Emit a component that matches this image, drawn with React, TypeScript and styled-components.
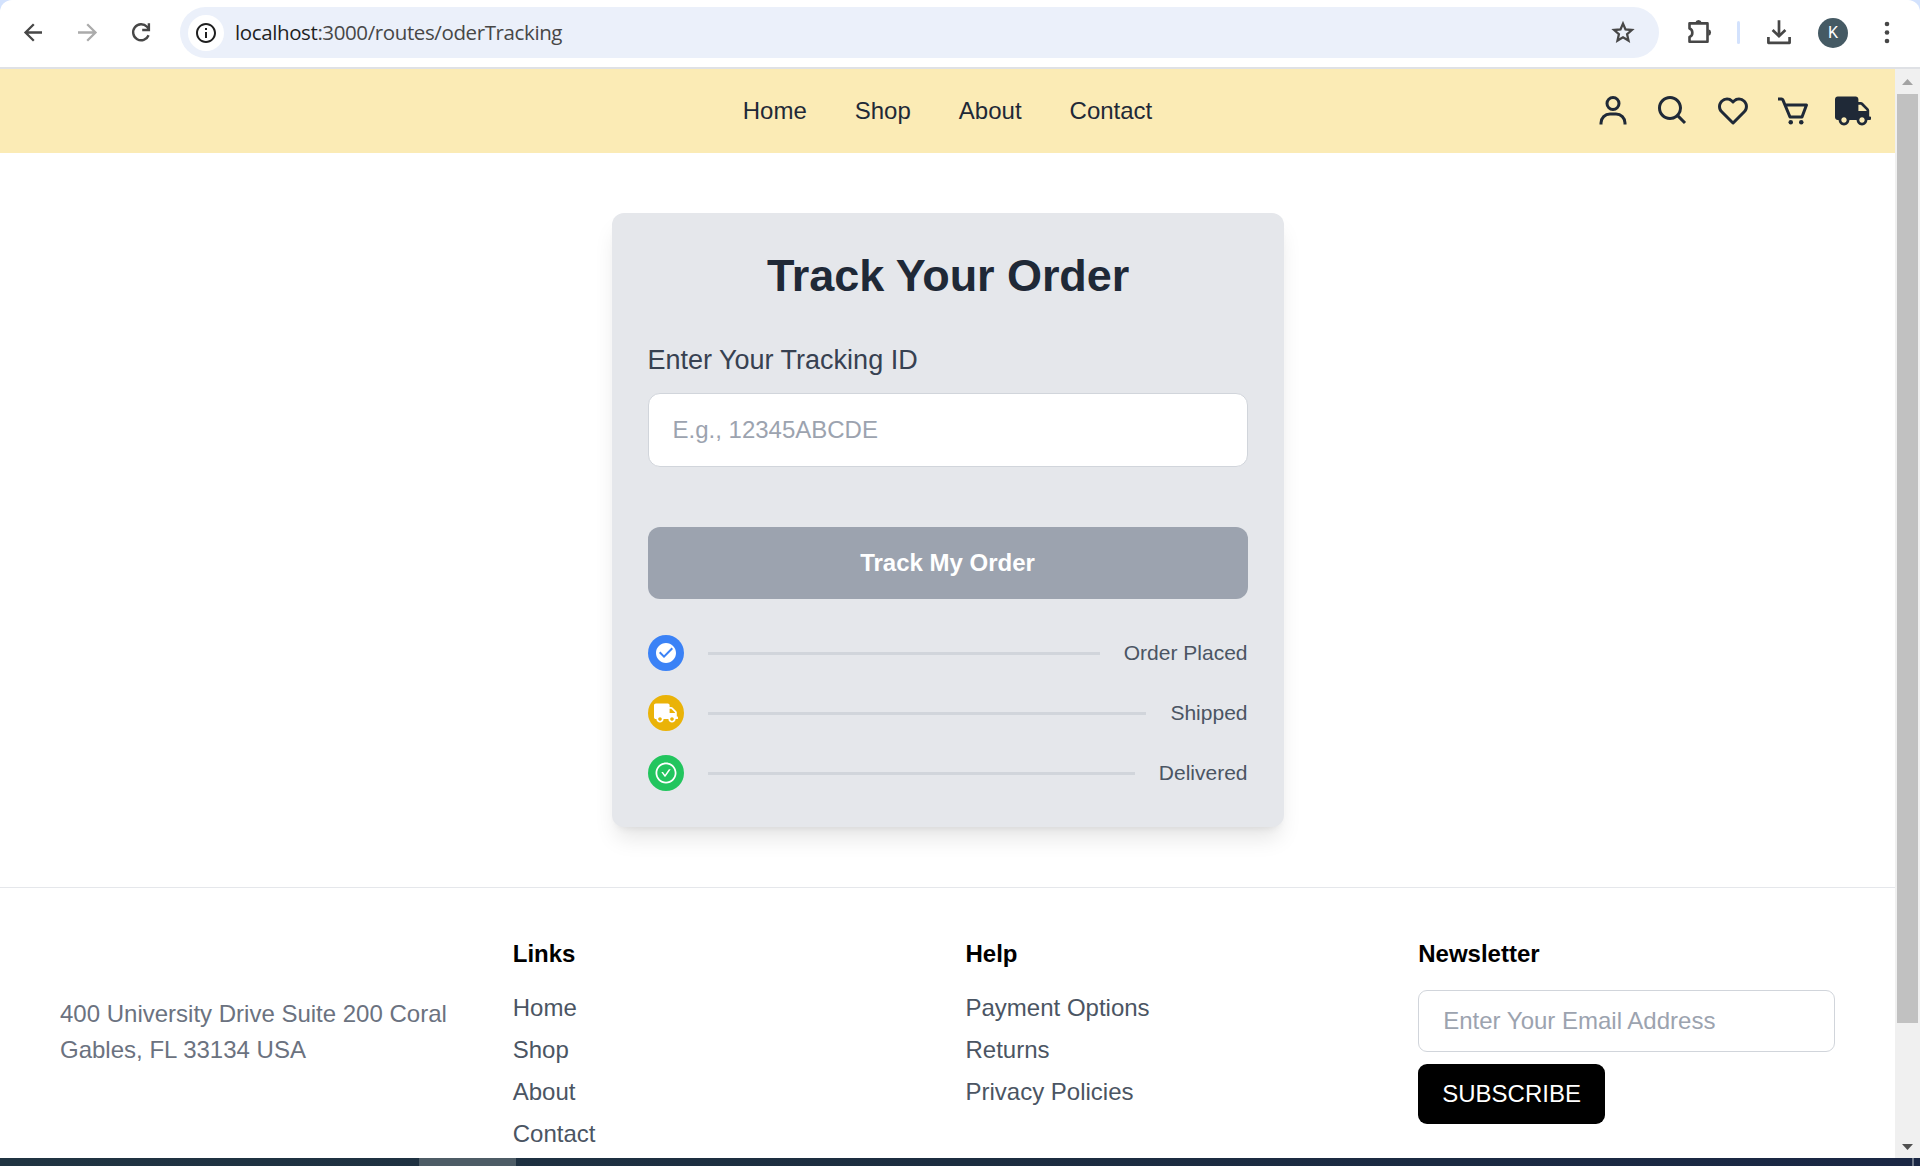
import React from "react";
import styled, { createGlobalStyle } from "styled-components";
import { BiUser, BiSearch, BiHeart, BiCart } from "react-icons/bi";
import { FaTruck } from "react-icons/fa";
import { AiOutlineCheckCircle } from "react-icons/ai";
import { MdCheckCircle, MdInfoOutline } from "react-icons/md";

const GlobalStyle = createGlobalStyle`
  *, *::before, *::after { box-sizing: border-box; }
  body { margin: 0; background: #fff; overflow: hidden; }
  body, input, button { font-family: "Liberation Sans", Arial, sans-serif; font-size: 24px; line-height: 36px; }
  h1, h2, p, ul { margin: 0; padding: 0; }
  ul { list-style: none; }
  a { color: inherit; text-decoration: none; }
  svg { display: block; flex: none; }
`;

const Screen = styled.div`
  display: flex;
  flex-direction: column;
  height: 1166px;
  overflow: hidden;
`;

const BrowserFrame = styled.div`
  flex: none;
  background: #d3e2fd;
`;

const Toolbar = styled.div`
  display: flex;
  align-items: center;
  height: 69px;
  padding: 0 21px 2px 20px;
  background: #fff;
  border-bottom: 2px solid #dfe1e5;
  border-radius: 12px 12px 0 0;
  color: #474747;
`;

const NavButtons = styled.div`
  display: flex;
  gap: 27px;
  width: 160px;
`;

const AddressBar = styled.div`
  display: flex;
  align-items: center;
  width: 1479px;
  height: 51px;
  padding: 0 24px 0 8px;
  border-radius: 26px;
  background: #ebf0fa;
`;

const SiteInfo = styled.div`
  display: grid;
  place-items: center;
  width: 36px;
  height: 36px;
  border-radius: 50%;
  background: #fff;
  color: #1f1f1f;
`;

const Url = styled.span`
  flex: 1;
  margin-left: 11px;
  padding-bottom: 2px;
  font-family: "Open Sans", "Noto Sans", sans-serif;
  font-size: 20.5px;
  letter-spacing: -0.39px;
  color: #474747;
`;

const Host = styled.span`
  color: #1f1f1f;
`;

const ToolbarActions = styled.div`
  display: flex;
  align-items: center;
  gap: 27px;
  margin-left: 28px;
`;

const Divider = styled.span`
  width: 3px;
  height: 23px;
  margin-left: -3px;
  border-radius: 2px;
  background: #d3e2fd;
`;

const Avatar = styled.span`
  display: grid;
  place-items: center;
  width: 30px;
  height: 30px;
  margin-top: 1px;
  border-radius: 50%;
  background: #455a64;
  color: #fff;
  font-family: Roboto, sans-serif;
  font-size: 16px;
  line-height: 30px;
`;

const Viewport = styled.div`
  display: flex;
  flex: 1;
  min-height: 0;
`;

const Page = styled.div`
  flex: 1;
  overflow: hidden;
`;

const Scrollbar = styled.div`
  display: flex;
  flex-direction: column;
  align-items: center;
  width: 25px;
  background: #f0f0f0;
`;

const ScrollArrow = styled.div<{ $down?: boolean }>`
  display: grid;
  place-items: center;
  width: 100%;
  height: 25px;
  padding-top: ${(p) => (p.$down ? 3 : 1)}px;
  color: ${(p) => (p.$down ? "#505050" : "#a3a3a3")};
  svg { transform: ${(p) => (p.$down ? "rotate(180deg)" : "none")}; }
`;

const ScrollTrack = styled.div`
  flex: 1;
  width: 21px;
`;

const ScrollThumb = styled.div`
  height: 929px;
  background: #c1c1c1;
`;

const Header = styled.header`
  display: grid;
  grid-template-columns: 1fr auto 1fr;
  align-items: center;
  height: 84px;
  padding: 0 24px;
  background: #fbebb5;
  color: #1f2937;
`;

const MainNav = styled.nav`
  display: flex;
  grid-column: 2;
  gap: 48px;
`;

const HeaderIcons = styled.div`
  display: flex;
  justify-content: flex-end;
  gap: 24px;
`;

const Main = styled.main`
  display: flex;
  justify-content: center;
  padding: 60px 0;
`;

const Card = styled.section`
  width: 672px;
  padding: 36px;
  border-radius: 12px;
  background: #e5e7eb;
  box-shadow: 0 15px 22.5px -4.5px rgba(0, 0, 0, 0.1), 0 6px 9px -6px rgba(0, 0, 0, 0.1);
`;

const Title = styled.h1`
  margin-bottom: 36px;
  padding-left: 1px;
  color: #1f2937;
  font-size: 45px;
  font-weight: 700;
  letter-spacing: -0.08px;
  line-height: 54px;
  text-align: center;
`;

const Label = styled.label`
  display: block;
  margin-bottom: 12px;
  color: #374151;
  font-size: 27px;
  line-height: 42px;
`;

const TextField = styled.input<{ $compact?: boolean }>`
  display: block;
  width: 100%;
  height: ${(p) => (p.$compact ? 62 : 74)}px;
  padding: 0 24px;
  border: 1px solid #d1d5db;
  border-radius: ${(p) => (p.$compact ? 9 : 12)}px;
  background: #fff;
  outline: none;
  &::placeholder { color: #9ca3af; opacity: 1; }
`;

const TrackButton = styled.button`
  display: block;
  width: 100%;
  height: 72px;
  margin: 60px 0 36px;
  padding: 0;
  border: 0;
  border-radius: 12px;
  background: #9ca3af;
  color: #fff;
  font-weight: 700;
`;

const Steps = styled.ul`
  display: flex;
  flex-direction: column;
  gap: 24px;
`;

const Step = styled.li`
  display: flex;
  align-items: center;
  gap: 24px;
  color: #4b5563;
  font-size: 21px;
  line-height: 30px;
`;

const StepBadge = styled.span<{ $color: string }>`
  display: grid;
  place-items: center;
  width: 36px;
  height: 36px;
  border-radius: 50%;
  background: ${(p) => p.$color};
  color: #fff;
`;

const StepLine = styled.span`
  flex: 1;
  height: 3px;
  background: #d1d5db;
`;

const Footer = styled.footer`
  display: grid;
  grid-template-columns: repeat(4, 1fr);
  gap: 36px;
  padding: 48px 60px;
  border-top: 1px solid #e5e7eb;
`;

const Address = styled.p`
  padding-top: 60px;
  color: #6b7280;
`;

const FooterHeading = styled.h2`
  margin-bottom: 18px;
  color: #000;
  font-size: 24px;
  font-weight: 700;
  line-height: 36px;
`;

const FooterLinks = styled.ul`
  display: flex;
  flex-direction: column;
  gap: 6px;
  color: #4b5563;
`;

const SubscribeButton = styled.button`
  height: 60px;
  margin-top: 12px;
  padding: 0 24px;
  border: 0;
  border-radius: 9px;
  background: #000;
  color: #fff;
`;

const Taskbar = styled.div`
  display: flex;
  flex: none;
  justify-content: space-between;
  height: 8px;
  padding: 0 6px 0 419px;
  background: linear-gradient(90deg, #203442, #1c2d40 50%, #1a2744);
`;

const ActiveTask = styled.span`
  width: 97px;
  background: #4d5c66;
`;

const DesktopEdge = styled.span`
  width: 2px;
  background: #6d7788;
`;

const ArrowIcon = ({ forward }: { forward?: boolean }) => (
  <svg width="27" height="27" viewBox="0 0 27 27" fill="none" stroke={forward ? "#ababab" : "currentColor"} strokeWidth="2.3">
    {forward ? (
      <path d="M4 13.5H21.5M13.2 5.2L21.5 13.5L13.2 21.8" />
    ) : (
      <path d="M22 13.5H5.5M13.8 5.2L5.5 13.5L13.8 21.8" />
    )}
  </svg>
);

const ReloadIcon = () => (
  <svg width="27" height="27" viewBox="0 0 27 27" fill="none" stroke="currentColor" strokeWidth="2.4">
    <path d="M20.6 16.2A8 8 0 1 1 19 7.8L21 10.2" />
    <path d="M20.9 4.2V11H14.2" />
  </svg>
);

const StarIcon = () => (
  <svg width="24" height="25" viewBox="0 0 24 25" fill="none" stroke="currentColor" strokeWidth="2.3" strokeMiterlimit="10">
    <path d="M12 3.6L14.5 9.4L20.9 10L16.1 14.2L17.5 20.6L12 17.3L6.5 20.6L7.9 14.2L3.1 10L9.5 9.4Z" />
  </svg>
);

const PuzzleIcon = () => (
  <svg width="26" height="27" viewBox="0 0 26 27" fill="none" stroke="currentColor" strokeWidth="2.6" strokeLinejoin="round">
    <path d="M2.5 4.4H20.5V22.8H2.5V17.9C6.3 16.6 6.3 10.8 2.5 9.5Z" />
    <path d="M8.3 3.6A3.3 3.6 0 0 1 14.7 3.6ZM21.4 10.3A3.6 3.3 0 0 1 21.4 16.7Z" fill="currentColor" stroke="none" />
  </svg>
);

const DownloadIcon = () => (
  <svg width="24" height="25" viewBox="0 0 24 25" fill="none" stroke="currentColor" strokeWidth="2.7">
    <path d="M12 0.3V16M5.6 10L12 16.2L18.4 10" />
    <path d="M1.4 17V22.8H22.6V17" strokeLinejoin="round" />
  </svg>
);

const MenuIcon = () => (
  <svg width="24" height="25" viewBox="0 0 24 25" fill="currentColor">
    <circle cx="12" cy="4" r="2.3" />
    <circle cx="12" cy="12.5" r="2.3" />
    <circle cx="12" cy="21" r="2.3" />
  </svg>
);

const Triangle = () => (
  <svg width="11" height="6" viewBox="0 0 11 6" fill="currentColor">
    <path d="M0 6L5.5 0L11 6Z" />
  </svg>
);

const menu = ["Home", "Shop", "About", "Contact"];
const help = ["Payment Options", "Returns", "Privacy Policies"];
const steps = [
  { label: "Order Placed", color: "#3b82f6", icon: <MdCheckCircle size={24} /> },
  { label: "Shipped", color: "#eab308", icon: <FaTruck size={24} /> },
  { label: "Delivered", color: "#22c55e", icon: <AiOutlineCheckCircle size={24} /> },
];

const LinkColumn = ({ title, links }: { title: string; links: string[] }) => (
  <div>
    <FooterHeading>{title}</FooterHeading>
    <FooterLinks>
      {links.map((link) => (
        <li key={link}>
          <a href="#">{link}</a>
        </li>
      ))}
    </FooterLinks>
  </div>
);

export default function App() {
  return (
    <Screen>
      <GlobalStyle />
      <BrowserFrame>
        <Toolbar>
          <NavButtons>
            <ArrowIcon />
            <ArrowIcon forward />
            <ReloadIcon />
          </NavButtons>
          <AddressBar>
            <SiteInfo>
              <MdInfoOutline size={24} />
            </SiteInfo>
            <Url>
              <Host>localhost</Host>:3000/routes/oderTracking
            </Url>
            <StarIcon />
          </AddressBar>
          <ToolbarActions>
            <PuzzleIcon />
            <Divider />
            <DownloadIcon />
            <Avatar>K</Avatar>
            <MenuIcon />
          </ToolbarActions>
        </Toolbar>
      </BrowserFrame>
      <Viewport>
        <Page>
          <Header>
            <MainNav>
              {menu.map((item) => (
                <a href="#" key={item}>
                  {item}
                </a>
              ))}
            </MainNav>
            <HeaderIcons>
              <BiUser size={36} />
              <BiSearch size={36} />
              <BiHeart size={36} />
              <BiCart size={36} />
              <FaTruck size={36} />
            </HeaderIcons>
          </Header>
          <Main>
            <Card>
              <Title>Track Your Order</Title>
              <Label htmlFor="tracking">Enter Your Tracking ID</Label>
              <TextField id="tracking" placeholder="E.g., 12345ABCDE" />
              <TrackButton>Track My Order</TrackButton>
              <Steps>
                {steps.map((step) => (
                  <Step key={step.label}>
                    <StepBadge $color={step.color}>{step.icon}</StepBadge>
                    <StepLine />
                    <span>{step.label}</span>
                  </Step>
                ))}
              </Steps>
            </Card>
          </Main>
          <Footer>
            <Address>400 University Drive Suite 200 Coral Gables, FL 33134 USA</Address>
            <LinkColumn title="Links" links={menu} />
            <LinkColumn title="Help" links={help} />
            <div>
              <FooterHeading>Newsletter</FooterHeading>
              <TextField $compact placeholder="Enter Your Email Address" />
              <SubscribeButton>SUBSCRIBE</SubscribeButton>
            </div>
          </Footer>
        </Page>
        <Scrollbar>
          <ScrollArrow>
            <Triangle />
          </ScrollArrow>
          <ScrollTrack>
            <ScrollThumb />
          </ScrollTrack>
          <ScrollArrow $down>
            <Triangle />
          </ScrollArrow>
        </Scrollbar>
      </Viewport>
      <Taskbar>
        <ActiveTask />
        <DesktopEdge />
      </Taskbar>
    </Screen>
  );
}
